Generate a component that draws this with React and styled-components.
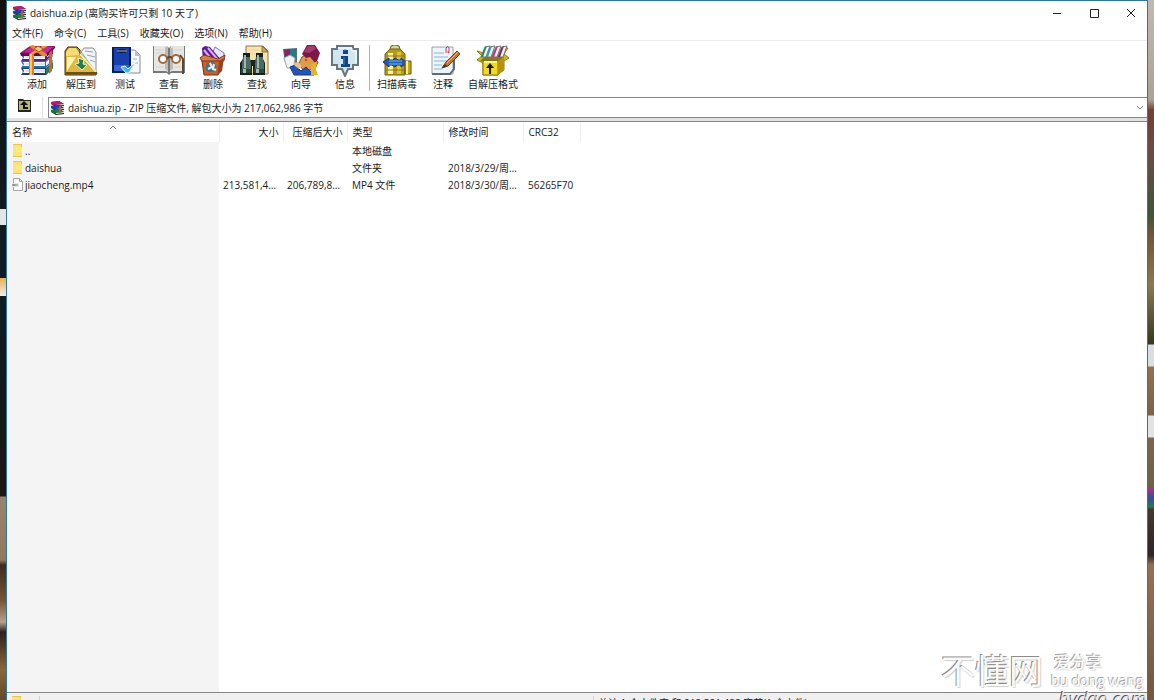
import React from 'react'
import styled, { createGlobalStyle } from 'styled-components'

const GlobalStyle = createGlobalStyle`
  * {
    box-sizing: border-box;
  }

  body {
    margin: 0;
    overflow: hidden;
    background: #14161a;
  }

  body, button, select, table {
    font: 10px/14px "Open Sans", "Noto Sans CJK SC", sans-serif;
    color: #1a1a1a;
  }

  button {
    padding: 0;
    border: 0;
    background: none;
  }

  svg {
    display: block;
    flex: none;
  }
`

const Desktop = styled.div`
  display: grid;
  grid-template-columns: 6px minmax(0, 1fr) 6px;
  height: 100vh;
  overflow: hidden;
`
const Wallpaper = styled.div`
  overflow: hidden;
  background: ${({ $stops }) => `linear-gradient(${$stops})`};
`
const Window = styled.main`
  position: relative;
  display: flex;
  flex-direction: column;
  height: calc(100vh + 14px);
  border: 1px solid #2878ab;
  background: white;
`
const TitleBar = styled.header`
  display: flex;
  align-items: center;
  gap: 4px;
  height: 24px;
  padding-left: 6px;
`
const Title = styled.h1`
  flex: 1;
  margin: 0;
  font-size: 10px;
  font-weight: 400;
  white-space: nowrap;
`
const WindowButton = styled.button`
  display: grid;
  place-items: center;
  width: 33px;
  height: 24px;
`
const MenuBar = styled.nav`
  display: flex;
  align-items: center;
  gap: 11px;
  height: 16px;
  padding-left: 5px;
  border-bottom: 1px solid #ececec;

  button {
    white-space: nowrap;
  }
`
const ToolBar = styled.div`
  display: flex;
  height: 56px;
  padding: 4px 8px 0;
`
const Tool = styled.button`
  display: flex;
  flex-direction: column;
  align-items: center;
  width: ${({ $width }) => $width || 44}px;
  white-space: nowrap;
`
const Divider = styled.div`
  width: 1px;
  height: 46px;
  margin: 0 3px 0 2px;
  background: #b4b4b4;
`
const AddressBar = styled.div`
  display: flex;
  height: 24px;
  border-bottom: 3px solid #e2e2e2;
`
const UpButton = styled.button`
  display: grid;
  place-items: center;
  width: 34px;
  padding-bottom: 4px;
`
const AddressBox = styled.label`
  display: flex;
  flex: 1;
  align-items: center;
  gap: 4px;
  margin-left: 2px;
  padding: 0 2px;
  border: 1px solid #858585;
  border-right: 0;

  select {
    flex: 1;
    min-width: 0;
    padding: 0;
    border: 0;
    appearance: none;
    background: white;
  }
`
const Grip = styled.div`
  width: 1px;
  margin: 0 3px 0 1px;
  background: #e0e0e0;
`
const Content = styled.section`
  flex: 1;
  min-height: 0;
  border-top: 1px solid #858585;
  background: linear-gradient(#f4f4f4, #f4f4f4) 0 0 / 212px 100% no-repeat;
`
const FileTable = styled.table`
  width: 100%;
  table-layout: fixed;
  border-collapse: collapse;

  th, td {
    overflow: hidden;
    height: 17px;
    padding: 0 5px;
    font-weight: 400;
    text-align: left;
    white-space: nowrap;
    text-overflow: ellipsis;
  }

  th {
    height: 20px;
    border-right: 1px solid #ededed;
    background: white;
  }

  th:last-child {
    border: 0;
  }

  .number {
    padding: 0 4px;
    text-align: right;
  }
`
const NameHead = styled.div`
  display: grid;
  grid-template-columns: 1fr auto 1fr;
`
const FileName = styled.div`
  display: flex;
  align-items: center;
  gap: 2px;
`
const StatusBar = styled.footer`
  display: grid;
  grid-template-columns: 33px minmax(0, 554px) minmax(0, 1fr);
  height: 21px;
  padding-top: 3px;
  border-top: 1px solid #858585;
  background: #f0f0f0;
`
const StatusPart = styled.div`
  padding-left: 4px;
  border-right: 1px solid #d2d2d2;

  &:last-child {
    border: 0;
  }
`
const Watermark = styled.div`
  position: absolute;
  right: 2px;
  bottom: 4px;
  display: flex;
  align-items: flex-start;
  gap: 8px;
  color: #fafafa;
  text-shadow: -1px -1px 0 #a4a4a4, 1px 1px 1px #d8d8d8;
  white-space: nowrap;
  pointer-events: none;
`
const SiteName = styled.div`
  font: 400 34px/40px "Noto Sans CJK SC", sans-serif;
  text-shadow: -1px -1px 0 #8c8c8c, 1px 1px 1px #d0d0d0;
`
const SiteNotes = styled.div`
  width: 94px;

  p {
    margin: 0;
  }
`
const Slogan = styled.p`
  padding-left: 3px;
  font: 500 16px/22px "Noto Sans CJK SC", sans-serif;
`
const Pinyin = styled.p`
  font: 14px/17px "Open Sans", sans-serif;
`
const Domain = styled.p`
  padding-left: 8px;
  font: italic 18px/20px "Open Sans", sans-serif;
  color: #e8e8e8;
  text-shadow: -1px -1px 0 #555;
`

const Svg = ({ w = 36, h = 32, children }) => (
  <svg width={w} height={h} viewBox={`0 0 ${w} ${h}`} aria-hidden="true">{children}</svg>
)

const Logo = () => (
  <Svg w={13} h={14}>
    {[['#c2187a', 0], ['#2440b8', 4], ['#16803c', 8]].map(([color, y]) => (
      <g key={color} transform={`translate(0 ${y})`}>
        <path d="M0 1 8 0l5 3v2l-8 1-5-3z" fill="#161616" />
        <path d="M0 1 8 0l5 3-8 1z" fill={color} />
        <path d="m5 4 8-1v1L5 5z" fill="#e8ecec" />
        <path d="m0 1 5 3v1L0 3z" fill={color} />
      </g>
    ))}
    <path d="M8 5h2v7H8z" fill="#a06a3a" />
  </Svg>
)

const Folder = () => (
  <Svg w={11} h={13}>
    <path d="M1 0h9v13H1z" fill="#e9c452" />
    <path d="M1 1h8v11H1z" fill="#fbe283" />
    <path d="M4 3h6v9H4z" fill="#ffe978" />
  </Svg>
)

const MediaFile = () => (
  <Svg w={11} h={13}>
    <path d="M1.500.500h6l3 3v9h-9z" fill="#fff" stroke="#a5a5a5" />
    <path d="M7.500.500v3h3" fill="none" stroke="#a5a5a5" />
    <path d="M0 5h7v4H0z" fill="#e5e5e5" />
    <path d="M1 8V6l1 2 1-2v2m2 0V6" fill="none" stroke="#888" />
  </Svg>
)

const AddIcon = () => (
  <Svg>
    {[['#24378f', '#3aa0d0', 23], ['#1d6fae', '#f7f8fa', 16], ['#4a2a8e', '#8a1470', 9]].map(([color, side, y]) => (
      <g key={y}>
        <path d={`M2 ${y}h25l7-6v6l-7 7H2l2-3z`} fill={color} />
        <path d={`M4 ${y + 1}h22v4H4l1-2z`} fill="#f8fafb" />
        <path d={`M6 ${y + 3}h20`} stroke="#b8cede" />
        <path d={`m27 ${y + 1} 7-6v4l-7 6z`} fill={side} />
        <path d={`m28 ${y + 3} 5-4`} stroke="#dfe8ee" />
      </g>
    ))}
    <path d="m27 24 7-6v5l-7 6z" fill="#2b7d4a" />
    <path d="M1 8 11 1h25l-8 8H3z" fill="#9c1278" />
    <path d="m5 7 7-5h22l-6 6z" fill="#c42a95" />
    <path d="M1 8h27l8-7v2l-8 8H2z" fill="#5e0d4c" />
    <path d="m10 1 4-1 14 9v2h-5z" fill="#e8892c" />
    <path d="m10 9 13-8h6L15 9z" fill="#f09a35" />
    <path d="M10 9h5v21h-5z" fill="#e07f26" />
    <path d="M11 9h2v21h-2z" fill="#ffc765" />
    <path d="m30 8 3-3v21l-3 3z" fill="#c96b1d" />
    <path d="m15 4 4-3 5 3-4 3z" fill="#ffcc66" stroke="#a85a18" />
  </Svg>
)

const ExtractIcon = () => (
  <Svg>
    <path d="M18 7 21 3h9l3 4v20z" fill="#f1f5fa" stroke="#888c92" />
    <path d="m22 6 8 1m-6 3 8 2m-5 3 5 2" stroke="#83a5c8" />
    <path d="M2 6 5 2h9l3 3v3l17 20-1 2H2z" fill="#a87d19" stroke="#4a3910" />
    <path d="M3 7 6 3h7l3 4v3L3 22z" fill="#f6dc72" />
    <path d="m3 11 13-1 16 18H3z" fill="#dfb947" />
    <path d="M4 12h9L4 26z" fill="#fff3af" />
    <path d="m17 9 16 18" stroke="#fff0a0" strokeWidth="2" />
    <path d="m15 13 6 2-1 4 4 1-5 5-7-6 4-1z" fill="#267e4d" stroke="#eaf5d1" />
    <path d="M3 28h30" stroke="#6d5114" strokeWidth="2" />
  </Svg>
)

const TestIcon = () => (
  <Svg>
    <path d="M22 5h6l5 5v18H20z" fill="#f5f7fa" stroke="#8a8e93" />
    <path d="M28 5v6h5z" fill="#b7c1ca" />
    <path d="M26 14h4m-4 4h5" stroke="#9eb5cf" />
    <path d="M5 2h19v23l-3 3H5z" fill="#071f70" />
    <path d="M7 3h15v23H7z" fill="#1740ae" />
    <path d="M5 2h2v25H5z" fill="#0a1b58" />
    <path d="M7 20h15v6H7z" fill="#3268d0" />
    <ellipse cx="15" cy="6" rx="5" ry="2" fill="#08194f" />
    <path d="M10 6h10" stroke="#c0b87a" />
    <path d="m14 22 4-1 3 3 8-8-7 12h-3z" fill="#35b9f5" stroke="#f1faff" />
  </Svg>
)

const ViewIcon = () => (
  <Svg>
    <path d="M2 1h14l2 2 2-2h14v27H20l-2 2-2-2H2z" fill="#77797a" />
    <path d="M3 1h13l1 3v23l-2-1H3zM33 1H20l-1 3v23l2-1h12z" fill="#e6e6e3" />
    <path d="M14 2h3v24l-3-2zM19 4l3-2v22l-3 2z" fill="#bcbdbb" />
    <path d="M5 5h8m-8 3h8m10-3h8m-8 17h8M5 22h8" stroke="#d3d3d1" />
    <circle cx="12" cy="14" r="4" fill="#fff" stroke="#a06b40" strokeWidth="2" />
    <circle cx="25" cy="14" r="4" fill="#fff" stroke="#a06b40" strokeWidth="2" />
    <path d="M16 13q3-2 5 0m8-3 3 4v15" fill="none" stroke="#684526" strokeWidth="2" />
  </Svg>
)

const DeleteIcon = () => (
  <Svg>
    <path d="m20 2 9 6v8H14z" fill="#e1e8f5" stroke="#7d7b91" />
    <path d="m7 3 3-2 5 1 12 14H8z" fill="#63189a" />
    <path d="m9 5 9 11M13 3l10 12" stroke="#d5b0ee" strokeWidth="2" />
    <path d="m5 13 4-3 14 4 7-4-1 5-5 3H8z" fill="#dd7a42" stroke="#813818" />
    <path d="M7 16h18l-2 14H9z" fill="#c8602e" stroke="#733218" />
    <path d="m24 16 5-3-2 13-4 4z" fill="#93441e" />
    <path d="m12 18 7-1 3 5-3 5h-6l-3-3z" fill="#477287" />
    <path d="m15 18 2 4-4 2m6-5-1 5 3 1" stroke="#e2f2f0" fill="none" strokeWidth="2" />
  </Svg>
)

const FindIcon = () => (
  <Svg>
    <path d="M7 1h17l5 5v23H7z" fill="#f8e3ad" stroke="#8d7450" />
    <path d="M23 1v6h6z" fill="#d7ac36" stroke="#8d7450" />
    <path d="M11 5h9m-9 4h13M14 26h13" stroke="#e8d7a0" />
    {[0, 13].map(x => (
      <g key={x} transform={`translate(${x} 0)`}>
        <path d="M4 8h7v6l2 4v12H1V18l3-4z" fill="#14231f" />
        <path d="M4 12h7v3l1 3v6H3v-6z" fill="#4d6b62" />
        <path d="M5 10h2v13H5z" fill="#9eb9ad" />
        <path d="M2 24h10v4H2z" fill="#304638" />
        <path d="M4 24h3v4H4z" fill="#a5b9ac" />
      </g>
    ))}
    <path d="M12 15h4v6h-4z" fill="#1b2520" />
  </Svg>
)

const WizardIcon = () => (
  <Svg w={38}>
    <path d="m1 4 14-1v15H3z" fill="#4d7082" />
    <path d="m2 5 6-1v9H3z" fill="#8b2260" />
    <path d="M8 4h6v9H8z" fill="#247b82" />
    <path d="m2 13 6-3 5 3-1 10H5z" fill="#eef3f5" stroke="#9aa3b1" />
    <path d="m20 12 5-3 11 8-3 7-11 2-3-4-3-2z" fill="#e09b48" stroke="#815528" />
    <path d="m20 9 5-9h8l5 8-4 11-6-7-4 1z" fill="#7a174b" />
    <path d="m22 7 4-6h6l2 3-7 4z" fill="#a53b70" />
    <path d="m8 22 5-2 6 6 5-4 8 8H12z" fill="#2355c0" stroke="#1d397f" />
    <path d="m11 18 5-1 4 4-3 3-4-3z" fill="#f0bf80" />
    <path d="m29 20 6-4-1 9 2 5h-7z" fill="#e5b42d" />
    <path d="M23 15h2" stroke="#3d2421" />
  </Svg>
)

const InfoIcon = () => (
  <Svg>
    <path d="M10 1h16v3h5v16h-5v4h-5l-3 7-3-7h-5v-4H5V4h5z" fill="#d3e5ef" stroke="#68777e" strokeWidth="2" />
    <path d="M11 3h14v3h4v12" fill="none" stroke="#fff" />
    <path d="M16 5h5v4h-5zm-2 6h7v8h2v3h-9v-3h2v-5h-2z" fill="#10438a" />
    <path d="M17 5h2m-2 7v8" stroke="#4386b6" />
  </Svg>
)

const VirusIcon = () => (
  <Svg>
    <path d="M11 4q0-4 4-4h2q4 0 4 4v3H11z" fill="#d2d29b" stroke="#606026" />
    <path d="m6 9 5-5h10l5 5v21H6z" fill="#b39b1b" stroke="#74620c" />
    <path d="M9 8h5v21H9z" fill="#fff38c" />
    <path d="M18 7h4v22h-4z" fill="#dfc52f" />
    <path d="M7 11h18M7 25h18" stroke="#887620" />
    <path d="m4 17 6-4v2h4l2-2 3 2h3v-2l6 5-6 4v-2h-4l-2 2-3-2h-3v2z" fill="#1e5dc0" stroke="#17366c" />
    <path d="M10 16h13m-13 3h13" stroke="#79b9ed" />
    <path d="M26 16h6v13h-6z" fill="#c9a723" stroke="#69520d" />
    <path d="M27 16h2v13h-2z" fill="#fff08c" />
  </Svg>
)

const CommentIcon = () => (
  <Svg>
    <path d="M7 2h21v27H7z" fill="#edf5fb" stroke="#9aa1a8" />
    <path d="M7 29h18l4-5v-9" fill="none" stroke="#5f6970" strokeWidth="2" />
    <path d="M9 8h10M9 12h14M9 16h13M9 20h8M9 24h8" stroke="#8fb3d2" />
    <path d="M21 8V3q2-3 3 0v5q-1 1-1-2" fill="none" stroke="#c93b72" />
    <path d="m17 23 4-6L32 6l3 3-12 12z" fill="#c8742b" stroke="#6f3e18" />
    <path d="M22 18 33 7" stroke="#f5bc70" />
    <path d="m17 23 3-4 2 2z" fill="#303236" />
  </Svg>
)

const SfxIcon = () => (
  <Svg>
    <path d="m2 6 7 2 16-4 8-1-4 6 5 4-5 3v9l-7 5H8V18l-6-3 5-4z" fill="#d4b814" stroke="#8f7e13" />
    {[['#17866c', 6], ['#23a0c0', 11], ['#c42a95', 17], ['#80205c', 23]].map(([color, x]) => (
      <g key={x} transform={`translate(${x} 0)`}>
        <path d="m0 12 4-10 5-1-4 11z" fill="#f2f3ef" stroke="#727478" />
        <path d="m0 12 4-10 2-1-4 11z" fill={color} />
      </g>
    ))}
    <path d="m5 16 4-4h20l-6 5z" fill="#8c7615" />
    <path d="M8 16h15v14H8z" fill="#f2d91f" stroke="#8a7311" />
    <path d="m23 16 6-4v13l-6 5z" fill="#b4930f" />
    <path d="M9 17h13" stroke="#fff68d" strokeWidth="2" />
    <path d="m15 18 4 5h-3v6h-2v-6h-3z" fill="#191a12" />
  </Svg>
)

const menus = ['文件(F)', '命令(C)', '工具(S)', '收藏夹(O)', '选项(N)', '帮助(H)']

const tools = [
  ['添加', AddIcon],
  ['解压到', ExtractIcon],
  ['测试', TestIcon],
  ['查看', ViewIcon],
  ['删除', DeleteIcon],
  ['查找', FindIcon],
  ['向导', WizardIcon],
  ['信息', InfoIcon]
]

const extraTools = [
  ['扫描病毒', VirusIcon, 48],
  ['注释', CommentIcon, 44],
  ['自解压格式', SfxIcon, 56]
]

const files = [
  { name: '..', icon: Folder, type: '本地磁盘' },
  { name: 'daishua', icon: Folder, type: '文件夹', date: '2018/3/29/周四' },
  { name: 'jiaocheng.mp4', icon: MediaFile, size: '213,581,488', packed: '206,789,823', type: 'MP4 文件', date: '2018/3/30/周五', crc: '56265F70' }
]

const leftStops = '#16100c 0, #101318 90px, #151a20 209px, #e5e5e5 209px, #e5e5e5 225px, #141a20 225px, #101c28 278px, #e4b251 278px, #eee 296px, #101c24 296px, #1c1712 496px, #98836d 497px, #93785d 560px, #3d2b1c 565px, #775333 600px, #b4a28c 622px, #2c211a 632px, #8b653b 670px, #503b22'
const rightStops = '#bfb9b1 0, #aaa294 100px, #743f31 110px, #6d4a45 150px, #3f5439 215px, #725536 235px, #8b794e 285px, #34391f 344px, #d9dee1 345px, #d9dee1 366px, #95704f 367px, #806044 415px, #e2e3e3 416px, #e2e3e3 437px, #80634b 438px, #6b6345 487px, #ac327f 488px, #334f9e 498px, #237b51 507px, #46382d 509px, #2c2625 555px, #967052 565px, #73533a'

const App = () => (
  <Desktop>
    <GlobalStyle />
    <Wallpaper $stops={leftStops} />
    <Window>
      <TitleBar>
        <Logo />
        <Title>daishua.zip (离购买许可只剩 10 天了)</Title>
        <WindowButton aria-label="最小化">
          <Svg w={10} h={10}><path d="M1 5.500h8" stroke="#222" /></Svg>
        </WindowButton>
        <WindowButton aria-label="最大化">
          <Svg w={10} h={10}><path d="M1.500 1.500h8v8h-8z" fill="none" stroke="#222" /></Svg>
        </WindowButton>
        <WindowButton aria-label="关闭">
          <Svg w={10} h={10}><path d="m1 1 8 8m0-8L1 9" stroke="#222" /></Svg>
        </WindowButton>
      </TitleBar>
      <MenuBar>
        {menus.map(menu => <button key={menu}>{menu}</button>)}
      </MenuBar>
      <ToolBar>
        {tools.map(([label, Icon]) => (
          <Tool key={label}><Icon />{label}</Tool>
        ))}
        <Divider />
        {extraTools.map(([label, Icon, width]) => (
          <Tool key={label} $width={width}><Icon />{label}</Tool>
        ))}
      </ToolBar>
      <AddressBar>
        <UpButton aria-label="向上">
          <Svg w={13} h={13}>
            <path d="M0 0h5l1 1h7v12H0z" fill="#262619" />
            <path d="M1 2h11v9H1z" fill="#b5b482" />
            <path d="m6 2 4 4H7v2h3v2H5V6H2z" fill="#111" />
          </Svg>
        </UpButton>
        <Grip />
        <AddressBox>
          <Logo />
          <select aria-label="地址">
            <option>daishua.zip - ZIP 压缩文件, 解包大小为 217,062,986 字节</option>
          </select>
          <Svg w={9} h={9}><path d="m1 3 3 3 3-3" fill="none" stroke="#777" /></Svg>
        </AddressBox>
      </AddressBar>
      <Content>
        <FileTable>
          <colgroup>
            <col width="212" />
            <col width="64" />
            <col width="64" />
            <col width="96" />
            <col width="80" />
            <col width="57" />
            <col />
          </colgroup>
          <thead>
            <tr>
              <th>
                <NameHead>
                  名称
                  <Svg w={8} h={5}><path d="m1 4 3-3 3 3" fill="none" stroke="#777" /></Svg>
                </NameHead>
              </th>
              <th className="number">大小</th>
              <th className="number">压缩后大小</th>
              <th>类型</th>
              <th>修改时间</th>
              <th>CRC32</th>
              <th />
            </tr>
          </thead>
          <tbody>
            {files.map(({ name, icon: Icon, size, packed, type, date, crc }) => (
              <tr key={name}>
                <td><FileName><Icon />{name}</FileName></td>
                <td className="number">{size}</td>
                <td className="number">{packed}</td>
                <td>{type}</td>
                <td>{date}</td>
                <td>{crc}</td>
                <td />
              </tr>
            ))}
          </tbody>
        </FileTable>
      </Content>
      <StatusBar>
        <StatusPart><Folder /></StatusPart>
        <StatusPart />
        <StatusPart>总计 1 个文件夹 和 213,581,488 字节(1 个文件)</StatusPart>
      </StatusBar>
      <Watermark>
        <SiteName>不懂网</SiteName>
        <SiteNotes>
          <Slogan>爱分享</Slogan>
          <Pinyin>bu dong wang</Pinyin>
          <Domain>bydao.com</Domain>
        </SiteNotes>
      </Watermark>
    </Window>
    <Wallpaper $stops={rightStops} />
  </Desktop>
)

export default App
